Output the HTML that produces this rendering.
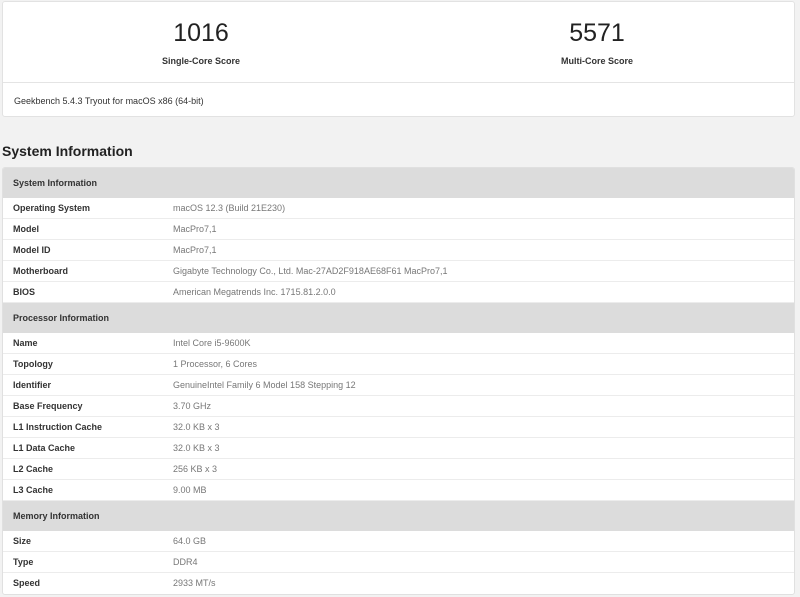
<!DOCTYPE html>
<html><head><style>
body{margin:0;background:#f2f2f2;font-family:"Liberation Sans",sans-serif;width:800px;height:597px;overflow:hidden;position:relative;color:#333}
.card{position:absolute;left:2px;top:1px;width:793px;height:116px;background:#fff;border:1px solid #e2e2e2;border-radius:3px;box-sizing:border-box}
.sc{position:absolute;top:0;width:396px;text-align:center}
.num{position:absolute;top:17px;width:100%;font-size:25px;color:#222}
.lbl{position:absolute;top:54px;width:100%;font-size:9px;font-weight:bold;color:#333}
.div{position:absolute;left:0;right:0;top:80px;border-top:1px solid #e4e4e4}
.ver{position:absolute;left:11px;top:94px;font-size:9px;color:#333}
h2{position:absolute;left:2px;top:143px;margin:0;font-size:14px;font-weight:bold;color:#222}
.tbl{position:absolute;left:2px;top:167px;width:793px;background:#fff;border:1px solid #e0e0e0;border-radius:3px;overflow:hidden;box-sizing:border-box}
.h{height:30px;line-height:30px;background:#dcdcdc;font-size:9px;font-weight:bold;padding-left:10px}
.r{height:21px;line-height:21px;font-size:9px;border-bottom:1px solid #ececec;box-sizing:border-box;position:relative}
.r b{position:absolute;left:10px;font-weight:bold;color:#333}
.r span{position:absolute;left:170px;color:#777}
</style></head><body>
<div class="card">
<div class="sc" style="left:0"><div class="num">1016</div><div class="lbl">Single-Core Score</div></div>
<div class="sc" style="left:396px"><div class="num">5571</div><div class="lbl">Multi-Core Score</div></div>
<div class="div"></div>
<div class="ver">Geekbench 5.4.3 Tryout for macOS x86 (64-bit)</div>
</div>
<h2>System Information</h2>
<div class="tbl">
<div class="h">System Information</div>
<div class="r"><b>Operating System</b><span>macOS 12.3 (Build 21E230)</span></div>
<div class="r"><b>Model</b><span>MacPro7,1</span></div>
<div class="r"><b>Model ID</b><span>MacPro7,1</span></div>
<div class="r"><b>Motherboard</b><span>Gigabyte Technology Co., Ltd. Mac-27AD2F918AE68F61 MacPro7,1</span></div>
<div class="r"><b>BIOS</b><span>American Megatrends Inc. 1715.81.2.0.0</span></div>
<div class="h">Processor Information</div>
<div class="r"><b>Name</b><span>Intel Core i5-9600K</span></div>
<div class="r"><b>Topology</b><span>1 Processor, 6 Cores</span></div>
<div class="r"><b>Identifier</b><span>GenuineIntel Family 6 Model 158 Stepping 12</span></div>
<div class="r"><b>Base Frequency</b><span>3.70 GHz</span></div>
<div class="r"><b>L1 Instruction Cache</b><span>32.0 KB x 3</span></div>
<div class="r"><b>L1 Data Cache</b><span>32.0 KB x 3</span></div>
<div class="r"><b>L2 Cache</b><span>256 KB x 3</span></div>
<div class="r"><b>L3 Cache</b><span>9.00 MB</span></div>
<div class="h">Memory Information</div>
<div class="r"><b>Size</b><span>64.0 GB</span></div>
<div class="r"><b>Type</b><span>DDR4</span></div>
<div class="r" style="border-bottom:0"><b>Speed</b><span>2933 MT/s</span></div>
</div>
</body></html>
